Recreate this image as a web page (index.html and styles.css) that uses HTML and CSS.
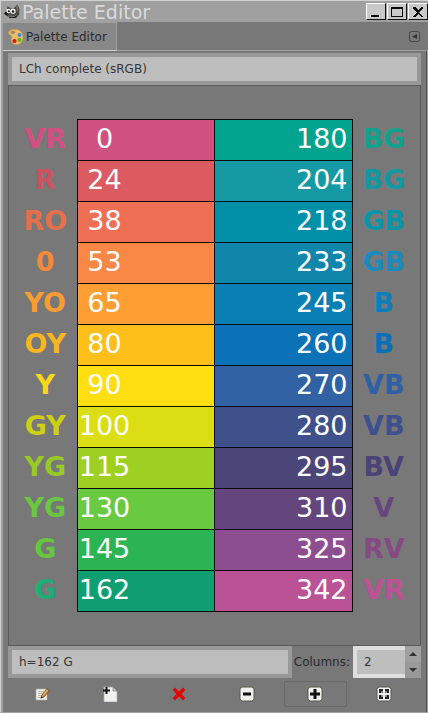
FILE: index.html
```html
<!DOCTYPE html>
<html lang="en">
<head>
<meta charset="utf-8">
<meta name="viewport" content="width=device-width, initial-scale=1">
<title>Palette Editor</title>
<link rel="stylesheet" href="styles.css">
</head>
<body>
<div class="window">
  <header class="titlebar">
    <svg class="app-icon" viewBox="0 0 16 16" aria-hidden="true">
      <path d="M3 6 3.500 2 7 4.500 10 4 13.500 .5 15.500 5l-.5 6-3 3H6L2 11.500.5 9z" fill="#4b4841"/>
      <path d="M3 11l5 1.500 6-3-2.500 4.500H6z" fill="#25231f"/>
      <path d="M12 3l1.500-2 1 4-1 3z" fill="#77736a"/>
      <circle cx="4.500" cy="7" r="2.200" fill="#f4f4f0"/><circle cx="9" cy="7.200" r="2.600" fill="#f4f4f0"/>
      <circle cx="4.800" cy="7.200" r="1" fill="#111"/><circle cx="9" cy="7.500" r="1.200" fill="#111"/>
      <path d="M0 9.500l2-1.500 2 1.500-1.500 2z" fill="#151515"/>
      <path d="M4 12l6 .5 3-2" fill="none" stroke="#b0aca2" stroke-width=".7"/>
    </svg>
    <h1>Palette Editor</h1>
    <div class="window-buttons">
      <button type="button" aria-label="Minimize"><svg viewBox="0 0 16 14"><path d="M3 10h8v2H3z"/></svg></button>
      <button type="button" aria-label="Maximize"><svg viewBox="0 0 16 14"><path fill-rule="evenodd" d="M2 2h12v10H2zM3 4v7h10V4z"/></svg></button>
      <button type="button" aria-label="Close"><svg viewBox="0 0 16 14"><path d="M3 2h3v1h1v1h1v1h1V4h1V3h1V2h2v2h-1v1h-1v1h-1v1h-1v1h1v1h1v1h1v1h1v1h-2v-1h-1v-1h-1V9H8v1H7v1H6v1H3v-1h1v-1h1V9h1V8h1V7H6V6H5V5H4V4H3z"/></svg></button>
    </div>
  </header>
  <nav class="tabs">
    <button type="button" class="tab">
      <svg viewBox="0 0 16 16" aria-hidden="true">
        <path d="M4 .8C1.500 1 .2 3 1 5c.6 1.500 2.800 1 3 2.500.2 1.300-1 2-.8 4 .3 2.600 2.500 4 5.300 4 4.300 0 6.500-3.500 6.500-7.500C15 3.500 12 .8 8 .5 6.500.4 5 .6 4 .8z" fill="#ebbd6c" stroke="#d59a42" stroke-width=".7"/>
        <ellipse cx="5" cy="3.500" rx="2" ry="1.400" fill="#8b8379" stroke="#c98f3e" stroke-width=".6"/>
        <circle cx="11.500" cy="6" r="2" fill="#3b8ed0"/><circle cx="6.500" cy="12" r="2.100" fill="#e31313"/><circle cx="11.500" cy="11" r="2.100" fill="#52bd12"/>
      </svg>
      Palette Editor
    </button>
    <button type="button" class="tab-menu" aria-label="Configure this tab">
      <svg viewBox="0 0 11 11"><rect x=".5" y=".5" width="10" height="10" rx="2" fill="none" stroke="#444"/><path d="M3 5.500 8 3v5z" fill="#333"/></svg>
    </button>
  </nav>
  <main class="editor">
    <input class="entry" aria-label="Palette name" value="LCh complete (sRGB)">
    <section class="canvas">
      <table class="palette">
        <colgroup><col class="name-col"><col><col><col class="name-col"></colgroup>
        <tbody>
          <tr><th style="color:#cf5081">VR</th><td style="background:#cf5081"><span>0</span></td><td style="background:#02a38f">180</td><th style="color:#11a28d">BG</th></tr>
          <tr><th style="color:#cd5260">R</th><td style="background:#db5b61"><span>24</span></td><td style="background:#159aa4">204</td><th style="color:#1198a0">BG</th></tr>
          <tr><th style="color:#e4704b">RO</th><td style="background:#ef6f55"><span>38</span></td><td style="background:#0290a9">218</td><th style="color:#0796a9">GB</th></tr>
          <tr><th style="color:#f18b3b">0</th><td style="background:#f98745"><span>53</span></td><td style="background:#1186ab">233</td><th style="color:#198bbd">GB</th></tr>
          <tr><th style="color:#f99d31">YO</th><td style="background:#ff9e33"><span>65</span></td><td style="background:#0a7fb4">245</td><th style="color:#0b7fbd">B</th></tr>
          <tr><th style="color:#f9b51e">OY</th><td style="background:#ffbf1b"><span>80</span></td><td style="background:#0b72b8">260</td><th style="color:#0b70ba">B</th></tr>
          <tr><th style="color:#f8d716">Y</th><td style="background:#ffde12"><span>90</span></td><td style="background:#3062a4">270</td><th style="color:#2f60a5">VB</th></tr>
          <tr><th style="color:#cdd112">GY</th><td style="background:#dade13"><span>100</span></td><td style="background:#3e518b">280</td><th style="color:#3d528d">VB</th></tr>
          <tr><th style="color:#99c925">YG</th><td style="background:#9ed023"><span>115</span></td><td style="background:#4c4678">295</td><th style="color:#4b4377">BV</th></tr>
          <tr><th style="color:#6ac740">YG</th><td style="background:#69c941"><span>130</span></td><td style="background:#64467d">310</td><th style="color:#67457f">V</th></tr>
          <tr><th style="color:#65c73e">G</th><td style="background:#2cb354"><span>145</span></td><td style="background:#8d4e90">325</td><th style="color:#874985">RV</th></tr>
          <tr><th style="color:#1aae76">G</th><td style="background:#0e9e70"><span>162</span></td><td style="background:#bb5295">342</td><th style="color:#be5095">VR</th></tr>
        </tbody>
      </table>
    </section>
    <div class="details">
      <input class="entry" aria-label="Color name" value="h=162 G">
      <label for="columns">Columns:</label>
      <div class="spin">
        <input id="columns" class="entry" inputmode="numeric" value="2">
        <div class="steps">
          <button type="button" aria-label="Increase"><svg viewBox="0 0 8 4"><path d="M0 4 4 0l4 4z"/></svg></button>
          <button type="button" aria-label="Decrease"><svg viewBox="0 0 8 4"><path d="M0 0h8L4 4z"/></svg></button>
        </div>
      </div>
    </div>
    <div class="actions">
      <button type="button" aria-label="Edit color"><svg viewBox="0 0 16 16"><path d="M2 3h11v11H2z" fill="#f1f1ee" stroke="#aaa9a3" stroke-width=".7"/><path d="M4 5.500h6M4 7.500h5M4 9.500h4M4 11.500h3" stroke="#b5b5b0"/><path d="M7 12l1-3 5-6.500 2.500 2L10 11z" fill="#d18b37" stroke="#754415" stroke-width=".8"/><path d="M9 9.500 13.500 4" stroke="#f5c580"/><path d="M6.500 12.500l1-2 1.500 1z" fill="#332b24"/></svg></button>
      <button type="button" aria-label="New color"><svg viewBox="0 0 16 16"><path d="M2 1h9l4 4v11H2z" fill="#f0f0ed" stroke="#aaa" stroke-width=".7"/><path d="M11 1v4h4z" fill="#d0d0cd" stroke="#777" stroke-width=".7"/><path d="M1 4.500h7M4.500 1v7" stroke="#111" stroke-width="2"/></svg></button>
      <button type="button" aria-label="Delete color"><svg viewBox="0 0 16 16"><path d="M4 4 12 12M12 4 4 12" stroke="#e40505" stroke-width="3.400" stroke-linecap="square"/></svg></button>
      <button type="button" aria-label="Zoom out"><svg viewBox="0 0 16 16"><rect x="1" y="1" width="14" height="14" rx="2.500" fill="#f0f0ec" stroke="#555850"/><path d="M4 6.500h8v3H4z" fill="#111"/></svg></button>
      <button type="button" class="focused" aria-label="Zoom in"><svg viewBox="0 0 16 16"><rect x="1" y="1" width="14" height="14" rx="2.500" fill="#f0f0ec" stroke="#555850"/><path d="M6.500 3h3v3.500H13v3H9.500V13h-3V9.500H3v-3h3.500z" fill="#111"/></svg></button>
      <button type="button" aria-label="Zoom all"><svg viewBox="0 0 16 16"><rect x="1" y="1" width="14" height="14" rx="2.500" fill="#f0f0ec" stroke="#555850"/><path d="M3 3h4v2H5v2H3zM9 3h4v4h-2V5H9zM3 9h2v2h2v2H3zM11 9h2v4H9v-2h2z" fill="#222"/><path d="M5 5h2v2H5zM9 5h2v2H9zM5 9h2v2H5zM9 9h2v2H9z" fill="#888"/></svg></button>
    </div>
  </main>
</div>
</body>
</html>
```
FILE: styles.css
```css
* { box-sizing: border-box; }

body {
  margin: 0;
  background: #787878;
  color: #2b2b2b;
  font: 12px/16px "DejaVu Sans", sans-serif;
}

button, input {
  margin: 0;
  padding: 0;
  border: 0;
  border-radius: 0;
  background: none;
  color: inherit;
  font: inherit;
}

svg { display: block; }

.window {
  display: flex;
  flex-direction: column;
  min-height: 100vh;
  border-top: 1px solid #d0d2d0;
  border-left: 1px solid #d0d2d0;
  border-bottom: 1px solid #a0a0a0;
}

.titlebar {
  display: flex;
  align-items: center;
  height: 21px;
  padding-left: 3px;
  background: #a0a0a0;
}

.app-icon { width: 16px; height: 16px; }

h1 {
  flex: 1;
  margin: 0;
  padding-left: 2px;
  color: #dadada;
  font-size: 19px;
  font-weight: 400;
  line-height: 20px;
}

.window-buttons {
  display: flex;
  align-self: center;
  gap: 1px;
}

.window-buttons button {
  width: 20px;
  height: 17px;
  padding: 0 1px;
  border: 1px solid;
  border-color: #fff #111 #111 #fff;
  background: #c9c9c9;
}

.window-buttons svg { width: 16px; height: 14px; fill: #0b0b0b; }

.tabs {
  display: flex;
  align-items: center;
  justify-content: space-between;
  height: 29px;
  padding-right: 8px;
  border-left: 2px solid #a0a0a0;
  border-bottom: 1px solid #a0a0a0;
}

.tab {
  display: flex;
  align-items: center;
  align-self: stretch;
  gap: 2px;
  margin-bottom: -1px;
  padding: 0 9px 0 5px;
  border: 1px solid #a0a0a0;
  border-left: 0;
  border-bottom: 1px solid #d0d0d0;
  background: #888;
}

.tab svg { width: 16px; height: 16px; }
.tab-menu svg { width: 11px; height: 11px; }

.editor {
  display: flex;
  flex: 1;
  flex-direction: column;
  padding: 2px 5px 0;
  border-left: 2px solid #a0a0a0;
  border-right: 2px groove #a0a0a0;
}

.entry {
  flex: 1;
  width: 100%;
  min-width: 0;
  height: 32px;
  padding: 0 7px;
  border: 4px solid #999;
  background: #bebebe;
  color: #363636;
}

.editor > .entry { flex: none; }

.canvas {
  display: flex;
  flex: 1;
  align-items: center;
  padding: 0 5px;
  border: 1px solid #5a5a5a;
}

.palette {
  width: 100%;
  table-layout: fixed;
  border-collapse: collapse;
  font-size: 27px;
  line-height: 32px;
}

.name-col { width: 63px; }

.palette th, .palette td {
  height: 41px;
  padding: 0 0 2px;
}

.palette th { white-space: nowrap; }

.palette td {
  padding-right: 4px;
  border: 1px solid #0b0b0b;
  color: #fff;
  text-align: right;
}

.palette td:nth-child(2) { text-align: left; }

.palette span {
  display: inline-block;
  width: 54px;
  text-align: center;
}

.details { display: flex; align-items: center; }
.details label { padding: 0 3px 0 2px; }

.spin { display: flex; width: 68px; }
.spin .entry { border-color: #dedede; border-right: 0; }

.steps { display: grid; width: 16px; }

.steps button {
  display: grid;
  place-items: center;
  background: #a0a0a0;
}

.steps button + button { background: #999; }
.steps svg { width: 8px; height: 4px; fill: #333; }

.actions {
  display: grid;
  grid-template-columns: repeat(6, 1fr);
  gap: 6px;
  padding: 3px 6px 5px 3px;
}

.actions button {
  display: grid;
  place-items: center;
  height: 26px;
  border: 1px solid transparent;
  border-radius: 2px;
}

.actions .focused { border-color: #6a6a6a; }
.actions svg { width: 16px; height: 16px; }
```
